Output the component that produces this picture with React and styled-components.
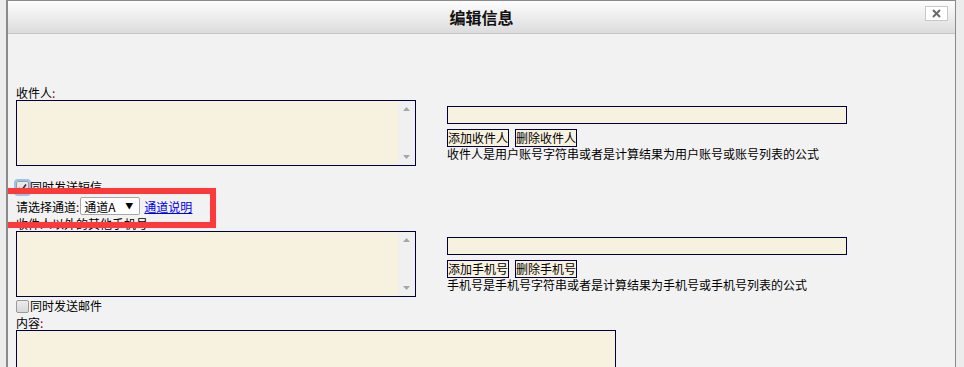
import React from 'react'
import styled, { createGlobalStyle } from 'styled-components'

const Global = createGlobalStyle`
  html, body {
    margin: 0;
    padding: 0;
    background: #ececec;
    overflow: hidden;
  }
  body {
    font-family: "Noto Sans CJK SC", "DejaVu Sans", sans-serif;
    font-size: 12px;
    color: #000;
  }
`

const Dialog = styled.div`
  margin-left: 6px;
  width: 950px;
  height: 367px;
  box-sizing: border-box;
  border: 1px solid #8a8a8a;
  border-left-width: 2px;
  border-bottom: none;
  background: #f2f2f2;
  overflow: hidden;
`

const Header = styled.div`
  height: 32px;
  display: grid;
  grid-template-columns: 1fr auto 1fr;
  align-items: center;
  background: linear-gradient(#fdfdfd, #dcdcdc);
  border-bottom: 1px solid #c6c6c6;
`

const Title = styled.h1`
  grid-column: 2;
  margin: 0;
  font-size: 16px;
  font-weight: bold;
  line-height: 32px;
  color: #111;
`

const Close = styled.button`
  grid-column: 3;
  justify-self: end;
  align-self: start;
  margin: 5px 7px 0 0;
  width: 23px;
  height: 15px;
  padding: 0;
  background: #fff;
  border: 1px solid #c8c8c8;
  display: flex;
  align-items: center;
  justify-content: center;
`

const Body = styled.div`
  padding: 52px 0 0 8px;
`

const Label = styled.div`
  line-height: 14px;
  height: 14px;
  white-space: nowrap;
  margin-top: ${p => p.$top || 0}px;
  span { color: #800020; }
`

const Row = styled.div`
  display: flex;
  gap: 31px;
  align-items: flex-start;
`

const AreaBox = styled.div`
  display: flex;
  box-sizing: border-box;
  width: ${p => p.$w || 400}px;
  height: ${p => p.$h || 66}px;
  background: #f7f1df;
  border: 1px solid #000040;
`

const Area = styled.textarea`
  flex: 1;
  min-width: 0;
  margin: 0;
  padding: 2px;
  background: transparent;
  border: none;
  outline: none;
  overflow: hidden;
  resize: none;
  font: inherit;
`

const Track = styled.div`
  width: 17px;
  background: #f0f0f0;
  display: flex;
  flex-direction: column;
  justify-content: space-between;
  align-items: center;
  padding: 6px 0;
  svg { display: block; }
`

const Side = styled.div`
  padding-top: 6px;
  width: 400px;
`

const Input = styled.input`
  display: block;
  box-sizing: border-box;
  width: 400px;
  height: 18px;
  margin: 0 0 5px;
  padding: 0 2px;
  background: #f7f1df;
  border: 1px solid #000040;
`

const Buttons = styled.div`
  display: flex;
  gap: 6px;
`

const Btn = styled.button`
  height: 18px;
  padding: 0;
  background: #f7f1df;
  border: 1px solid #000040;
  font: inherit;
  line-height: 16px;
  color: #000;
`

const Help = styled.div`
  line-height: 14px;
  white-space: nowrap;
`

const CheckRow = styled.label`
  display: flex;
  align-items: center;
  height: ${p => p.$h || 14}px;
  margin-top: ${p => p.$top || 0}px;
  line-height: 14px;
  white-space: nowrap;
`

const Box = styled.span`
  box-sizing: border-box;
  width: 13px;
  height: 13px;
  margin-right: 1px;
  border: 1px solid #9a9a9a;
  border-radius: 2px;
  background: linear-gradient(#ececec, #d8d8d8);
  display: flex;
  align-items: center;
  justify-content: center;
  box-shadow: ${p => (p.$focus ? '0 0 0 2px #9cc0f0' : 'none')};
`

const ChannelRow = styled.div`
  position: relative;
  display: flex;
  align-items: center;
  height: 22px;
  margin-top: 1px;
  white-space: nowrap;
  span.c { color: #800020; }
`

const Highlight = styled.div`
  position: absolute;
  left: -17px;
  top: -7px;
  width: 217px;
  height: 40px;
  box-sizing: border-box;
  border: 6px solid #fd3a3a;
  pointer-events: none;
`

const SelectWrap = styled.span`
  position: relative;
  display: inline-block;
  margin-left: 1px;
`

const Select = styled.select`
  appearance: none;
  box-sizing: border-box;
  width: 60px;
  height: 18px;
  padding: 0 0 0 3px;
  background: #fff;
  border: 1px solid #a8a8a8;
  border-radius: 2px;
  font: inherit;
  color: #000;
`

const Arrow = styled.span`
  position: absolute;
  right: 7px;
  top: 4px;
  font-size: 8px;
  line-height: 10px;
  pointer-events: none;
`

const Link = styled.a`
  margin-left: 4px;
  color: #0000ee;
  text-decoration: underline;
`

const Check = () => (
  <svg width="9" height="9" viewBox="0 0 9 9">
    <path d="M1 5 L3.5 7.5 L8 1.5" stroke="#333" strokeWidth="1.6" fill="none" />
  </svg>
)

const Tri = ({ down }) => (
  <svg width="7" height="4" viewBox="0 0 7 4">
    <path d={down ? 'M0 0 H7 L3.5 4 Z' : 'M0 4 H7 L3.5 0 Z'} fill="#a6a6a6" />
  </svg>
)

const ScrollArea = ({ w, h, scroll }) => (
  <AreaBox $w={w} $h={h}>
    <Area />
    {scroll && (
      <Track>
        <Tri />
        <Tri down />
      </Track>
    )}
  </AreaBox>
)

export default function App() {
  return (
    <>
      <Global />
      <Dialog>
        <Header>
          <Title>编辑信息</Title>
          <Close>
            <svg width="11" height="9" viewBox="0 0 11 9">
              <path d="M2 1 L9 8 M9 1 L2 8" stroke="#6a6a6a" strokeWidth="2" />
            </svg>
          </Close>
        </Header>
        <Body>
          <Label>收件人<span>:</span></Label>
          <Row>
            <ScrollArea scroll />
            <Side>
              <Input />
              <Buttons>
                <Btn>添加收件人</Btn>
                <Btn>删除收件人</Btn>
              </Buttons>
              <Help>收件人是用户账号字符串或者是计算结果为用户账号或账号列表的公式</Help>
            </Side>
          </Row>
          <CheckRow $top={14}>
            <Box $focus><Check /></Box>同时发送短信
          </CheckRow>
          <ChannelRow>
            请选择通道<span className="c">:</span>
            <SelectWrap>
              <Select defaultValue="A">
                <option value="A">通道A</option>
                <option value="B">通道B</option>
              </Select>
              <Arrow>▼</Arrow>
            </SelectWrap>
            <Link href="#">通道说明</Link>
            <Highlight />
          </ChannelRow>
          <Label>收件人以外的其他手机号</Label>
          <Row>
            <ScrollArea scroll />
            <Side>
              <Input />
              <Buttons>
                <Btn>添加手机号</Btn>
                <Btn>删除手机号</Btn>
              </Buttons>
              <Help>手机号是手机号字符串或者是计算结果为手机号或手机号列表的公式</Help>
            </Side>
          </Row>
          <CheckRow $h={18}>
            <Box />同时发送邮件
          </CheckRow>
          <Label $top={1}>内容<span>:</span></Label>
          <ScrollArea w={600} h={80} />
        </Body>
      </Dialog>
    </>
  )
}
